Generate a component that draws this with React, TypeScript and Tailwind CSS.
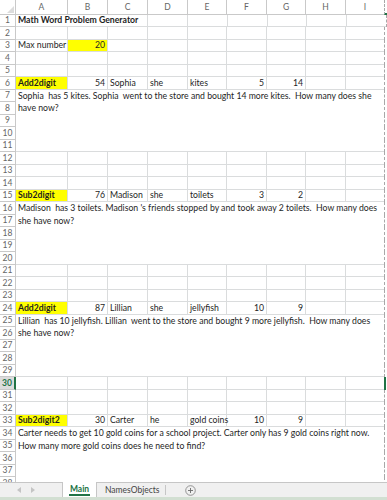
import React from "react";

type C = { t?: string; b?: boolean; r?: boolean; y?: boolean; w?: string };

const CW = [
  "w-[52px]",
  "w-[40px]",
  "w-[40px]",
  "w-[40px]",
  "w-[39px]",
  "w-[40px]",
  "w-[39px]",
  "w-[40px]",
  "w-[38px]",
];
const LETTERS = ["A", "B", "C", "D", "E", "F", "G", "H", "I"];

type Row =
  | { kind: "grid"; cells: C[] }
  | { kind: "merge"; text?: string; last?: boolean };

const empty = (): C[] => CW.map(() => ({}));

const dataRow = (a: string, n: string, name: string, pr: string, obj: string, x: string, y: string): C[] => [
  { t: a, b: true, y: true },
  { t: n, r: true },
  { t: name },
  { t: pr },
  { t: obj },
  { t: x, r: true },
  { t: y, r: true },
  {},
  {},
];

const merge = (lines: string[]): Row[] =>
  [0, 1, 2, 3, 4].map((i) => ({ kind: "merge", text: lines[i], last: i === 4 }));

const rows: Row[] = [
  {
    kind: "grid",
    cells: [{ t: "Math Word Problem Generator", b: true, w: "w-[132px]" }, {}, {}, {}, {}, {}, {}],
  },
  { kind: "grid", cells: empty() },
  {
    kind: "grid",
    cells: [{ t: "Max number" }, { t: "20", r: true, y: true }, {}, {}, {}, {}, {}, {}, {}],
  },
  { kind: "grid", cells: empty() },
  { kind: "grid", cells: empty() },
  { kind: "grid", cells: dataRow("Add2digit", "54", "Sophia", "she", "kites", "5", "14") },
  ...merge([
    "Sophia  has 5 kites. Sophia  went to the store and bought 14 more kites.  How many does she",
    "have now?",
  ]),
  { kind: "grid", cells: empty() },
  { kind: "grid", cells: empty() },
  { kind: "grid", cells: empty() },
  { kind: "grid", cells: dataRow("Sub2digit", "76", "Madison", "she", "toilets", "3", "2") },
  ...merge([
    "Madison  has 3 toilets. Madison 's friends stopped by and took away 2 toilets.  How many does",
    "she have now?",
  ]),
  { kind: "grid", cells: empty() },
  { kind: "grid", cells: empty() },
  { kind: "grid", cells: empty() },
  { kind: "grid", cells: dataRow("Add2digit", "87", "Lillian", "she", "jellyfish", "10", "9") },
  ...merge([
    "Lillian  has 10 jellyfish. Lillian  went to the store and bought 9 more jellyfish.  How many does",
    "she have now?",
  ]),
  { kind: "grid", cells: empty() },
  { kind: "grid", cells: empty() },
  { kind: "grid", cells: empty() },
  { kind: "grid", cells: dataRow("Sub2digit2", "30", "Carter", "he", "gold coins", "10", "9") },
  ...merge([
    "Carter needs to get 10 gold coins for a school project. Carter only has 9 gold coins right now.",
    "How many more gold coins does he need to find?",
  ]),
];

const GRID = "border-[#dadcdd]";
const HDR = "border-[#c9c9c9]";

function RowView({ row, n }: { row: Row; n: number }) {
  const h = n % 2 === 1 ? "h-[12px]" : "h-[13px]";
  const sel = n === 30;
  return (
    <div className={`flex ${h} shrink-0`}>
      <div
        className={
          sel
            ? `w-[16px] shrink-0 flex items-center justify-center border-b ${HDR} border-r-2 border-r-[#217346] bg-[#dcdcdc] text-[#217346] font-bold text-[8.5px] leading-none`
            : `w-[16px] shrink-0 flex items-center justify-center border-b border-r ${HDR} bg-white text-[#666] text-[8.5px] leading-none`
        }
      >
        {n}
      </div>
      {row.kind === "merge" ? (
        <div
          className={`w-[368px] shrink-0 ${row.last ? `border-b ${GRID}` : ""} pl-[2px] flex items-center whitespace-pre text-[#1e1e1e] leading-none overflow-visible`}
        >
          {row.text ?? ""}
        </div>
      ) : (
        row.cells.map((c, i) => {
          const w = c.w ?? CW[i];
          const isLast = i === row.cells.length - 1;
          return (
            <div
              key={i}
              className={`${w} shrink-0 border-b ${isLast ? "" : "border-r"} ${GRID} ${
                c.y ? "bg-[#ffff00]" : ""
              } flex items-center ${c.r ? "justify-end pr-[2px]" : "pl-[2px]"} whitespace-pre text-[#1e1e1e] leading-none ${
                c.b ? "font-bold" : ""
              }`}
            >
              {c.t ?? ""}
            </div>
          );
        })
      )}
      <div
        className={
          sel
            ? "flex-1 border-l-2 border-[#217346]"
            : "flex-1 border-l border-dashed border-[#a8a8a8]"
        }
      />
    </div>
  );
}

export default function App() {
  return (
    <div
      className="w-[387px] h-[500px] overflow-hidden bg-white flex flex-col text-[8.7px]"
      style={{ fontFamily: "Lato, 'Liberation Sans', sans-serif" }}
    >
      <div className="flex-1 overflow-hidden flex flex-col">
        {/* column header */}
        <div className="flex h-[15px] shrink-0">
          <div className={`w-[16px] shrink-0 border-b border-r ${HDR} bg-white relative`}>
            <svg className="absolute right-[1px] bottom-[1px]" width="7" height="7" viewBox="0 0 7 7">
              <polygon points="7,0 7,7 0,7" fill="#dcdcdc" />
            </svg>
          </div>
          {LETTERS.map((l, i) => (
            <div
              key={l}
              className={`${CW[i]} shrink-0 border-b ${i === 8 ? "" : "border-r"} ${HDR} flex items-center justify-center text-[#666] text-[8.5px] leading-none`}
            >
              {l}
            </div>
          ))}
          <div className="flex-1 border-l border-dashed border-[#a8a8a8] border-b-2 border-b-[#217346]" />
        </div>
        {rows.map((r, i) => (
          <RowView key={i} row={r} n={i + 1} />
        ))}
      </div>
      {/* sheet tabs */}
      <div className="h-[15px] shrink-0 bg-[#f0f0f0] border-t border-[#c6c6c6] flex items-stretch text-[8.5px] leading-none">
        <div className="w-[62px] flex items-center gap-[10px] pl-[17px]">
          <svg width="4" height="6" viewBox="0 0 4 6">
            <polygon points="4,0 4,6 0,3" fill="#c4c4c4" />
          </svg>
          <svg width="4" height="6" viewBox="0 0 4 6">
            <polygon points="0,0 0,6 4,3" fill="#c4c4c4" />
          </svg>
        </div>
        <div className="w-[35px] -mt-px bg-white border-x border-[#c6c6c6] flex items-center justify-center">
          <span className="font-bold text-[#217346] border-b-2 border-[#217346] pb-[1px] mt-[2px] px-[1px]">Main</span>
        </div>
        <div className="w-[69px] flex items-center pl-[8px] text-[#444] border-r border-[#c6c6c6] my-[2px]">
          NamesObjects
        </div>
        <div className="flex items-center pl-[19px]">
          <svg width="11" height="11" viewBox="0 0 11 11">
            <circle cx="5.5" cy="5.5" r="4.8" fill="none" stroke="#8a8a8a" strokeWidth="0.9" />
            <path d="M5.5 3v5M3 5.5h5" stroke="#6a6a6a" strokeWidth="0.9" />
          </svg>
        </div>
      </div>
      <div className="h-[3px] shrink-0 bg-[#d2dfd2]" />
    </div>
  );
}
